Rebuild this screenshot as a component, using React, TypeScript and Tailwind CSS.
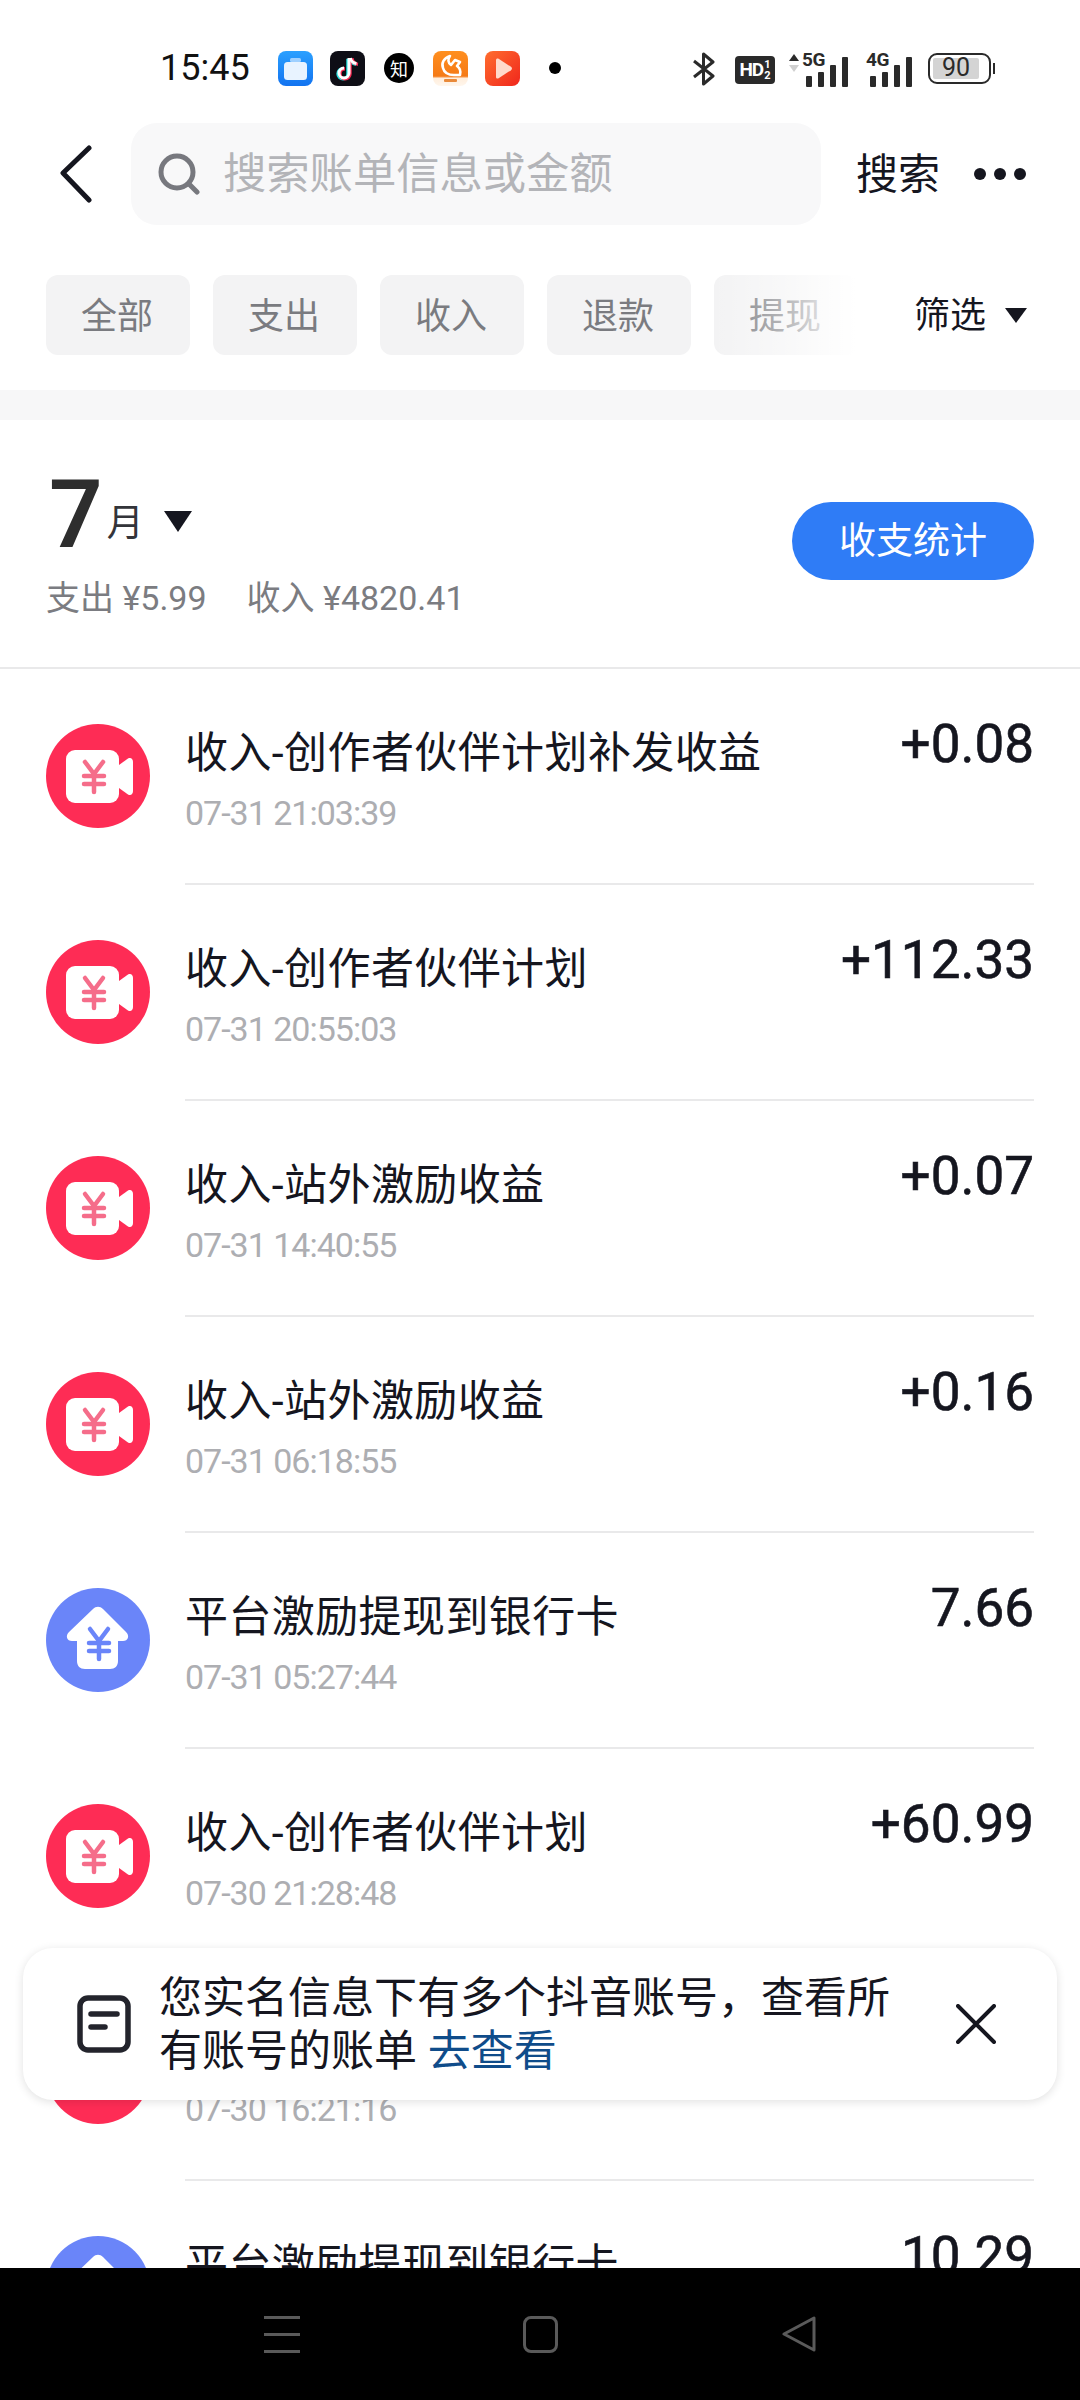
import React from "react";

const FONT = "font-['Roboto','Noto_Sans_CJK_SC',sans-serif]";

function Yen({ color, x = 0, y = 0 }: { color: string; x?: number; y?: number }) {
  return (
    <g transform={`translate(${x} ${y})`} stroke={color} strokeWidth="4.5" strokeLinecap="round" strokeLinejoin="round" fill="none">
      <path d="M3 1 L12 13 L21 1" />
      <path d="M2 15 H22" />
      <path d="M2 23 H22" />
      <path d="M12 13 V31" />
    </g>
  );
}

function IncomeIcon() {
  return (
    <svg width="104" height="104" viewBox="0 0 104 104" className="shrink-0">
      <circle cx="52" cy="52" r="52" fill="#fe2c55" />
      <rect x="20" y="26" width="53" height="53" rx="9" fill="#fff" />
      <path d="M73 41 L82 34.5 C85 33 87 35 87 38 V67 C87 70 85 72 82 70.5 L73 64 Z" fill="#fff" />
      <Yen color="#f56d8a" x="36" y="37" />
    </svg>
  );
}

function WithdrawIcon() {
  return (
    <svg width="104" height="104" viewBox="0 0 104 104" className="shrink-0">
      <circle cx="52" cy="52" r="52" fill="#6a85f9" />
      <path
        d="M47 21 C50 18 54 18 57 21 L80 44 C84 48 82 53 77 53 H72 V73 C72 78 69 81 64 81 H39 C34 81 31 78 31 73 V53 H26 C21 53 19 48 23 44 Z"
        fill="#fff"
      />
      <Yen color="#6a85f9" x="41" y="40" />
    </svg>
  );
}

function Bars({ className = "" }: { className?: string }) {
  return (
    <div className={`flex items-end gap-[6px] ${className}`}>
      <span className="w-[6px] h-[11px] rounded-[1px] bg-[#2a2a2a]" />
      <span className="w-[6px] h-[15px] rounded-[1px] bg-[#2a2a2a]" />
      <span className="w-[6px] h-[22px] rounded-[1px] bg-[#2a2a2a]" />
      <span className="w-[6px] h-[30px] rounded-[1px] bg-[#2a2a2a]" />
    </div>
  );
}

function StatusBar() {
  return (
    <div className="h-[123px] shrink-0 flex items-start pt-[51px] pl-[160px]">
      <span className="text-[36px] leading-[35px] w-[118px] text-[#111] font-['Roboto',sans-serif]">15:45</span>
      <svg width="35" height="35" viewBox="0 0 35 35" className="shrink-0">
        <defs>
          <linearGradient id="notes" x1="0" y1="0" x2="0" y2="1">
            <stop offset="0" stopColor="#2ba0ff" />
            <stop offset="1" stopColor="#1273f0" />
          </linearGradient>
        </defs>
        <rect width="35" height="35" rx="8" fill="url(#notes)" />
        <rect x="12" y="7" width="11" height="4" rx="1.5" fill="#9fd0ff" />
        <rect x="6" y="11" width="23" height="18" rx="3.5" fill="#e8f3ff" />
      </svg>
      <svg width="35" height="35" viewBox="0 0 35 35" className="shrink-0 ml-[17px]">
        <rect width="35" height="35" rx="8" fill="#0e0e16" />
        <path d="M19 7 V22 A5 5 0 1 1 14 17" fill="none" stroke="#25e6e6" strokeWidth="3.4" transform="translate(-1 0.8)" />
        <path d="M21 6.5 C21.5 10 23.5 12 27 12.5" fill="none" stroke="#25e6e6" strokeWidth="3.2" transform="translate(-1 0.8)" />
        <path d="M19 7 V22 A5 5 0 1 1 14 17" fill="none" stroke="#fe2c55" strokeWidth="3.4" transform="translate(1 0.8)" />
        <path d="M21 6.5 C21.5 10 23.5 12 27 12.5" fill="none" stroke="#fe2c55" strokeWidth="3.2" transform="translate(1 0.8)" />
        <path d="M19 7 V22 A5 5 0 1 1 14 17" fill="none" stroke="#fff" strokeWidth="3" />
        <path d="M20.5 7 C21 10 23 12 26.5 12.5" fill="none" stroke="#fff" strokeWidth="2.8" />
      </svg>
      <div className="ml-[19px] mt-[2px] w-[30px] h-[30px] rounded-full bg-black text-white text-[18px] leading-[30px] text-center shrink-0 font-['Noto_Sans_CJK_SC',sans-serif]">
        知
      </div>
      <svg width="35" height="35" viewBox="0 0 35 35" className="shrink-0 ml-[19px]">
        <defs>
          <linearGradient id="uc" x1="0" y1="0" x2="0" y2="1">
            <stop offset="0" stopColor="#ff8f1f" />
            <stop offset="0.72" stopColor="#f57a16" />
            <stop offset="0.78" stopColor="#ffeedd" />
            <stop offset="1" stopColor="#fff6ec" />
          </linearGradient>
        </defs>
        <rect width="35" height="35" rx="8" fill="url(#uc)" />
        <path d="M17 5 C11 7 8 12 10 17 C11 21 15 24 21 24 H27 C28 20 27 17 24 15 L27 11 L22 9 L18 14 C15 12 14.5 8 17 5 Z" fill="none" stroke="#fff" strokeWidth="2.6" strokeLinejoin="round" />
        <rect x="11" y="28" width="13" height="3" rx="1" fill="#e98a3a" />
      </svg>
      <svg width="35" height="35" viewBox="0 0 35 35" className="shrink-0 ml-[17px]">
        <defs>
          <linearGradient id="play" x1="0" y1="0" x2="1" y2="1">
            <stop offset="0" stopColor="#ff6d2e" />
            <stop offset="1" stopColor="#f0261c" />
          </linearGradient>
        </defs>
        <rect width="35" height="35" rx="8" fill="url(#play)" />
        <path d="M11 9 C11 7.5 12.4 7 13.6 7.7 L26 15.8 C27.2 16.6 27.2 18.4 26 19.2 L13.6 27.3 C12.4 28 11 27.5 11 26 Z" fill="#ffd9cb" />
      </svg>
      <span className="ml-[29px] mt-[11px] w-[12px] h-[12px] rounded-full bg-black shrink-0" />
      <svg width="24" height="34" viewBox="0 0 24 34" className="shrink-0 ml-[131px] mt-[1px]" fill="none" stroke="#2a2a2a" strokeWidth="3" strokeLinejoin="round">
        <path d="M2 9 L21 24 L11.5 32 V2 L21 10 L2 25" />
      </svg>
      <div className="ml-[19px] mt-[5px] w-[40px] h-[28px] bg-[#2a2a2a] rounded-[4px] flex items-center justify-center shrink-0 text-white font-['Roboto',sans-serif] font-bold">
        <span className="text-[19px] leading-[28px] tracking-[-1px]">HD</span>
        <span className="flex flex-col text-[11px] leading-[11px] ml-[1px]">
          <span>1</span>
          <span>2</span>
        </span>
      </div>
      <div className="relative ml-[14px] w-[60px] h-[36px] shrink-0">
        <svg width="10" height="18" viewBox="0 0 10 18" className="absolute left-0 top-[3px]">
          <path d="M5 0 L10 7 H0 Z" fill="#2a2a2a" />
          <path d="M5 18 L10 11 H0 Z" fill="#cfcfcf" />
        </svg>
        <span className="absolute left-[13px] top-0 text-[19px] leading-[18px] font-bold tracking-[-0.5px] text-[#2a2a2a] font-['Roboto',sans-serif]">5G</span>
        <Bars className="absolute left-[17px] bottom-0" />
      </div>
      <div className="relative ml-[17px] w-[46px] h-[36px] shrink-0">
        <span className="absolute left-0 top-0 text-[19px] leading-[18px] font-bold tracking-[-0.5px] text-[#2a2a2a] font-['Roboto',sans-serif]">4G</span>
        <Bars className="absolute left-[4px] bottom-0" />
      </div>
      <div className="ml-[16px] mt-[2px] flex items-center shrink-0">
        <div className="w-[63px] h-[31px] rounded-[9px] border-[2.5px] border-[#2a2a2a] p-[3px] flex">
          <div className="w-[46px] h-full bg-[#d4d4d4] rounded-[2px] text-[25px] leading-[20px] text-center text-[#2a2a2a] font-['Roboto',sans-serif]">90</div>
        </div>
        <span className="ml-[2px] w-[2px] h-[11px] bg-[#2a2a2a]" />
      </div>
    </div>
  );
}

function SearchRow() {
  return (
    <div className="h-[102px] shrink-0 flex items-center">
      <svg width="36" height="58" viewBox="0 0 36 58" className="ml-[58px] shrink-0" fill="none" stroke="#15161f" strokeWidth="5" strokeLinecap="round" strokeLinejoin="round">
        <path d="M31 3 L5 28 L31 55" />
      </svg>
      <div className="ml-[37px] w-[690px] h-[102px] rounded-[26px] bg-[#f8f8f9] flex items-center pl-[27px]">
        <svg width="42" height="42" viewBox="0 0 42 42" fill="none" stroke="#77787e" strokeWidth="5" strokeLinecap="round">
          <circle cx="19" cy="19" r="16" />
          <path d="M31 31 L39 39" />
        </svg>
        <span className="ml-[23px] mt-[2px] text-[43.3px] leading-[60px] text-[#b3b4b8]">搜索账单信息或金额</span>
      </div>
      <span className="ml-[35px] mt-[2px] text-[42px] leading-[60px] text-[#15161f]">搜索</span>
      <div className="ml-[34px] flex gap-[8px]">
        <span className="w-[12px] h-[12px] rounded-full bg-[#15161f]" />
        <span className="w-[12px] h-[12px] rounded-full bg-[#15161f]" />
        <span className="w-[12px] h-[12px] rounded-full bg-[#15161f]" />
      </div>
    </div>
  );
}

function Chip({ label }: { label: string }) {
  return (
    <div className="w-[144px] h-[80px] rounded-[12px] bg-[#f3f3f4] flex items-center justify-center pt-[3px] pr-[2px] text-[36px] text-[#7a7b80] shrink-0">
      {label}
    </div>
  );
}

function FilterRow() {
  return (
    <div className="mt-[50px] h-[80px] shrink-0 flex items-center pl-[46px]">
      <div className="relative flex gap-[23px] w-[810px] overflow-hidden shrink-0">
        <Chip label="全部" />
        <Chip label="支出" />
        <Chip label="收入" />
        <Chip label="退款" />
        <Chip label="提现" />
        <div className="absolute right-0 top-0 bottom-0 w-[144px] bg-gradient-to-r from-white/0 via-white/45 to-white" />
      </div>
      <span className="ml-[58px] mt-[2px] text-[36px] leading-[50px] text-[#15161f]">筛选</span>
      <span className="ml-[19px] w-0 h-0 border-l-[11px] border-r-[11px] border-t-[15px] border-l-transparent border-r-transparent border-t-[#15161f]" />
    </div>
  );
}

function MonthSummary() {
  return (
    <div className="h-[249px] shrink-0 border-b-[2px] border-[#e9e9ea] flex items-start justify-between pl-[46px] pr-[46px]">
      <div>
        <div className="flex items-end mt-[45px] h-[100px]">
          <span className="text-[94px] leading-[100px] font-semibold text-[#2e2e2e] ml-[3px]">7</span>
          <span className="text-[37px] leading-[50px] ml-[4px] mb-[16px] text-[#33343a]">月</span>
          <span className="ml-[20px] mb-[33px] w-0 h-0 border-l-[14px] border-r-[14px] border-t-[21px] border-l-transparent border-r-transparent border-t-[#15161f]" />
        </div>
        <div className="mt-[8px] flex text-[34px] leading-[50px] text-[#7b7c81]">
          <span>支出 ¥5.99</span>
          <span className="ml-[40px]">收入 ¥4820.41</span>
        </div>
      </div>
      <div className="mt-[82px] w-[242px] h-[78px] rounded-full bg-[#2f7cf6] flex items-center justify-center pt-[2px] text-white text-[37px]">
        收支统计
      </div>
    </div>
  );
}

type Row = { title: string; time: string; amount: string; kind: "income" | "withdraw" };

const rows: Row[] = [
  { title: "收入-创作者伙伴计划补发收益", time: "07-31 21:03:39", amount: "+0.08", kind: "income" },
  { title: "收入-创作者伙伴计划", time: "07-31 20:55:03", amount: "+112.33", kind: "income" },
  { title: "收入-站外激励收益", time: "07-31 14:40:55", amount: "+0.07", kind: "income" },
  { title: "收入-站外激励收益", time: "07-31 06:18:55", amount: "+0.16", kind: "income" },
  { title: "平台激励提现到银行卡", time: "07-31 05:27:44", amount: "7.66", kind: "withdraw" },
  { title: "收入-创作者伙伴计划", time: "07-30 21:28:48", amount: "+60.99", kind: "income" },
  { title: "收入-站外激励收益", time: "07-30 16:21:16", amount: "+0.21", kind: "income" },
  { title: "平台激励提现到银行卡", time: "07-30 05:27:44", amount: "10.29", kind: "withdraw" },
];

function BillRow({ row }: { row: Row }) {
  return (
    <div className="h-[216px] shrink-0 flex pl-[46px] pr-[46px]">
      <div className="pt-[55px] w-[139px] shrink-0">
        {row.kind === "income" ? <IncomeIcon /> : <WithdrawIcon />}
      </div>
      <div className="flex-1 border-b-[2px] border-[#e9e9ea] flex justify-between items-start">
        <div className="pt-[54px]">
          <div className="text-[43px] leading-[60px] tracking-[0.4px] text-[#15161f]">{row.title}</div>
          <div className="mt-[8px] text-[34px] leading-[44px] tracking-[-1px] text-[#adaeb2]">{row.time}</div>
        </div>
        <div className="pt-[45px] text-[53px] leading-[60px] text-[#15161f] [-webkit-text-stroke:0.6px_#15161f]">{row.amount}</div>
      </div>
    </div>
  );
}

function Notice() {
  return (
    <div className="absolute left-[23px] top-[1948px] w-[1034px] h-[152px] rounded-[30px] bg-white shadow-[0_2px_10px_rgba(0,0,0,0.12)] flex items-center pl-[54px]">
      <svg width="54" height="58" viewBox="0 0 54 58" fill="none" className="shrink-0">
        <rect x="3" y="3" width="48" height="52" rx="8" stroke="#23242c" strokeWidth="5.5" />
        <path d="M14 19 H40" stroke="#23242c" strokeWidth="5.5" strokeLinecap="round" />
        <path d="M14 32 H28" stroke="#23242c" strokeWidth="5.5" strokeLinecap="round" />
      </svg>
      <div className="ml-[28px] mt-[1px] w-[740px] text-[43px] leading-[53px] text-[#15161f]">
        您实名信息下有多个抖音账号，查看所有账号的账单 <span className="text-[#0f4c8a]">去查看</span>
      </div>
      <svg width="40" height="40" viewBox="0 0 40 40" className="ml-[57px] shrink-0" fill="none" stroke="#15161f" strokeWidth="4" strokeLinecap="round">
        <path d="M2 2 L38 38 M38 2 L2 38" />
      </svg>
    </div>
  );
}

function NavBar() {
  return (
    <div className="h-[132px] bg-black shrink-0 relative flex items-start justify-center pt-[48px]">
      <div className="flex items-start">
        <div className="w-[36px] h-[37px] flex flex-col justify-between">
          <span className="h-[3px] bg-[#5a5a5a]" />
          <span className="h-[3px] bg-[#5a5a5a]" />
          <span className="h-[3px] bg-[#5a5a5a]" />
        </div>
        <div className="ml-[223px] w-[35px] h-[37px] rounded-[8px] border-[3px] border-[#5a5a5a]" />
        <svg width="36" height="36" viewBox="0 0 36 36" className="ml-[223px]" fill="none" stroke="#5a5a5a" strokeWidth="3" strokeLinejoin="round">
          <path d="M33 2 V34 L3 18 Z" />
        </svg>
      </div>
    </div>
  );
}

export default function App() {
  return (
    <div className={`relative w-[1080px] h-[2400px] bg-white overflow-hidden flex flex-col ${FONT}`}>
      <div className="flex-1 min-h-0 overflow-hidden flex flex-col">
        <StatusBar />
        <SearchRow />
        <FilterRow />
        <div className="mt-[35px] h-[30px] bg-[#f7f7f8] shrink-0" />
        <MonthSummary />
        {rows.map((r, i) => (
          <BillRow key={i} row={r} />
        ))}
      </div>
      <NavBar />
      <Notice />
    </div>
  );
}
